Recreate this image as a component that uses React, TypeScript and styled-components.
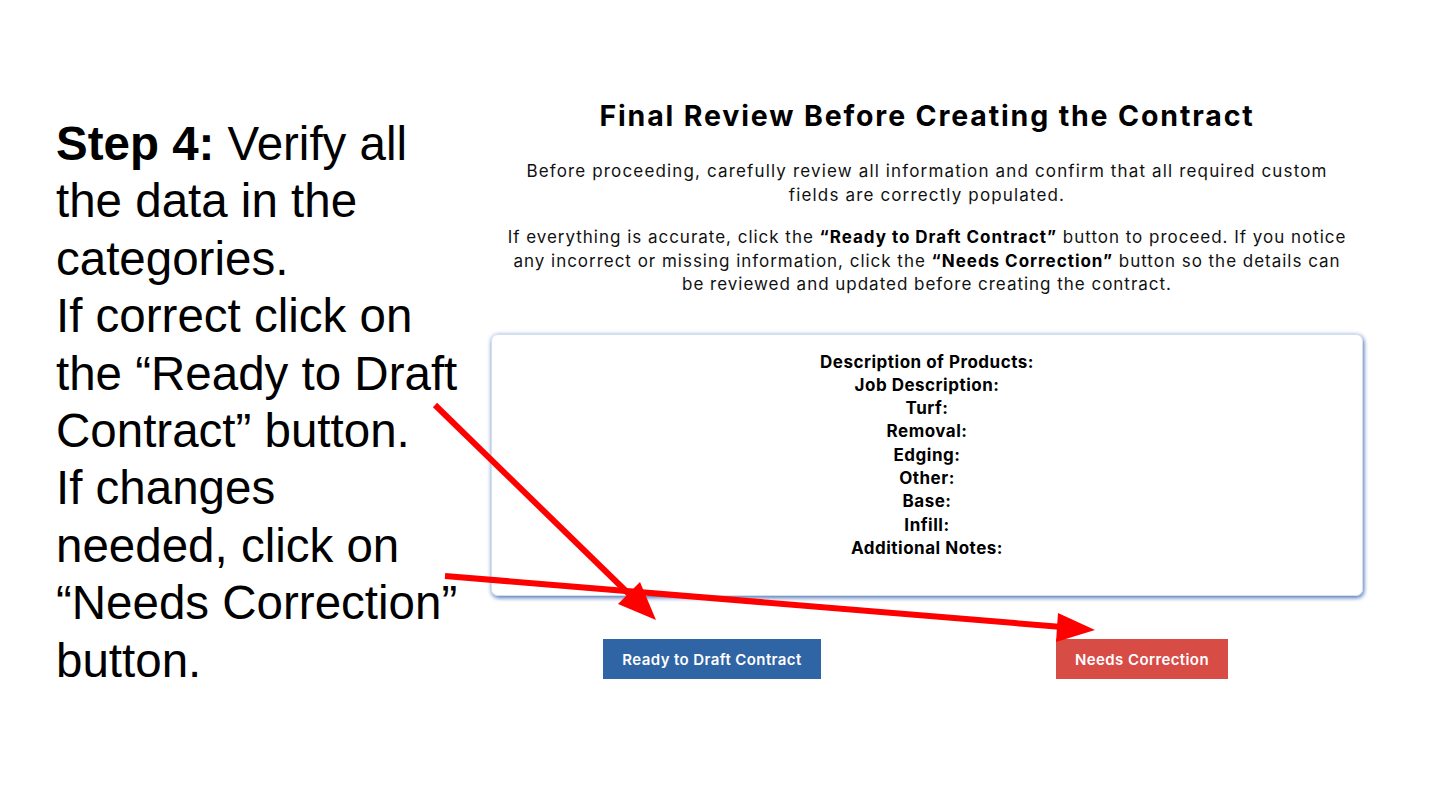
import React from 'react'
import styled, { createGlobalStyle } from 'styled-components'

const GlobalStyle = createGlobalStyle`
  html, body {
    margin: 0;
    padding: 0;
    background: #ffffff;
  }
`;

const Slide = styled.div`
  position: relative;
  width: 1440px;
  height: 810px;
  display: flex;
  overflow: hidden;
  background: #ffffff;
`;

const Instructions = styled.div`
  width: 435px;
  padding: 115px 0 0 56px;
  box-sizing: border-box;
  font-family: "Liberation Sans", Arial, sans-serif;
  font-size: 47.5px;
  line-height: 57.4px;
  color: #000;
  flex-shrink: 0;
  white-space: nowrap;
`;

const Review = styled.div`
  width: 872px;
  margin-left: 56px;
  padding-top: 98px;
  display: flex;
  flex-direction: column;
  align-items: center;
  font-family: Inter, "Open Sans", sans-serif;
  color: #111;
`;

const Title = styled.h1`
  margin: 0;
  font-size: 28.5px;
  line-height: 36px;
  font-weight: 700;
  color: #000;
  letter-spacing: 1.85px;
  white-space: nowrap;
`;

const Paragraph = styled.p<{ $top: number; $spacing: number }>`
  margin: ${(p) => p.$top}px 0 0;
  font-size: 17px;
  line-height: 23.5px;
  text-align: center;
  letter-spacing: ${(p) => p.$spacing}px;
  white-space: nowrap;

  b {
    font-weight: 700;
    color: #000;
  }
`;

const Card = styled.div`
  margin-top: 37px;
  width: 100%;
  box-sizing: border-box;
  padding: 16px 20px 35px;
  border: 1px solid #d5dfec;
  border-radius: 7px;
  box-shadow: 1px 2px 4px rgba(40, 90, 170, 0.75), 0 0 4px rgba(70, 120, 190, 0.3);
  display: flex;
  flex-direction: column;
  align-items: center;
`;

const Field = styled.div`
  font-size: 17px;
  line-height: 23.3px;
  font-weight: 700;
  color: #000;
  letter-spacing: 0.5px;
`;

const Actions = styled.div`
  margin-top: 43px;
  width: 100%;
  box-sizing: border-box;
  padding: 0 6px;
  display: grid;
  grid-template-columns: 1fr 1fr;
  justify-items: center;
`;

const ActionButton = styled.button<{ $tone: 'primary' | 'danger' }>`
  height: 40px;
  padding: 0 19.5px;
  border: none;
  border-radius: 0;
  background: ${(p) => (p.$tone === 'primary' ? '#2f64a5' : '#d84c46')};
  color: #fff;
  font-family: Inter, "Open Sans", sans-serif;
  font-size: 15px;
  font-weight: 600;
  letter-spacing: 0.4px;
  cursor: pointer;
`;

const Overlay = styled.svg`
  position: absolute;
  left: 0;
  top: 0;
  pointer-events: none;
`;

const fields = [
  'Description of Products:',
  'Job Description:',
  'Turf:',
  'Removal:',
  'Edging:',
  'Other:',
  'Base:',
  'Infill:',
  'Additional Notes:',
];

const App: React.FC = () => {
  return (
    <>
      <GlobalStyle />
      <Slide>
        <Instructions>
          <b>Step 4:</b> Verify all
          <br />
          the data in the
          <br />
          categories.
          <br />
          If correct click on
          <br />
          the “Ready to Draft
          <br />
          Contract” button.
          <br />
          If changes
          <br />
          needed, click on
          <br />
          “Needs Correction”
          <br />
          button.
        </Instructions>
        <Review>
          <Title>Final Review Before Creating the Contract</Title>
          <Paragraph $top={26} $spacing={1.15}>
            Before proceeding, carefully review all information and confirm that all required custom
            <br />
            fields are correctly populated.
          </Paragraph>
          <Paragraph $top={19} $spacing={0.98}>
            If everything is accurate, click the <b>“Ready to Draft Contract”</b> button to proceed. If you notice
            <br />
            any incorrect or missing information, click the <b>“Needs Correction”</b> button so the details can
            <br />
            be reviewed and updated before creating the contract.
          </Paragraph>
          <Card>
            {fields.map((f) => (
              <Field key={f}>{f}</Field>
            ))}
          </Card>
          <Actions>
            <ActionButton $tone="primary">Ready to Draft Contract</ActionButton>
            <ActionButton $tone="danger">Needs Correction</ActionButton>
          </Actions>
        </Review>
        <Overlay width="1440" height="810" viewBox="0 0 1440 810">
          <line x1="435" y1="405" x2="632" y2="597" stroke="#ff0000" strokeWidth="6" />
          <polygon points="656,620 618,604 640,582" fill="#ff0000" />
          <line x1="445" y1="576" x2="1062" y2="627" stroke="#ff0000" strokeWidth="6" />
          <polygon points="1095,630 1058,613 1056,642" fill="#ff0000" />
        </Overlay>
      </Slide>
    </>
  );
};

export default App;
